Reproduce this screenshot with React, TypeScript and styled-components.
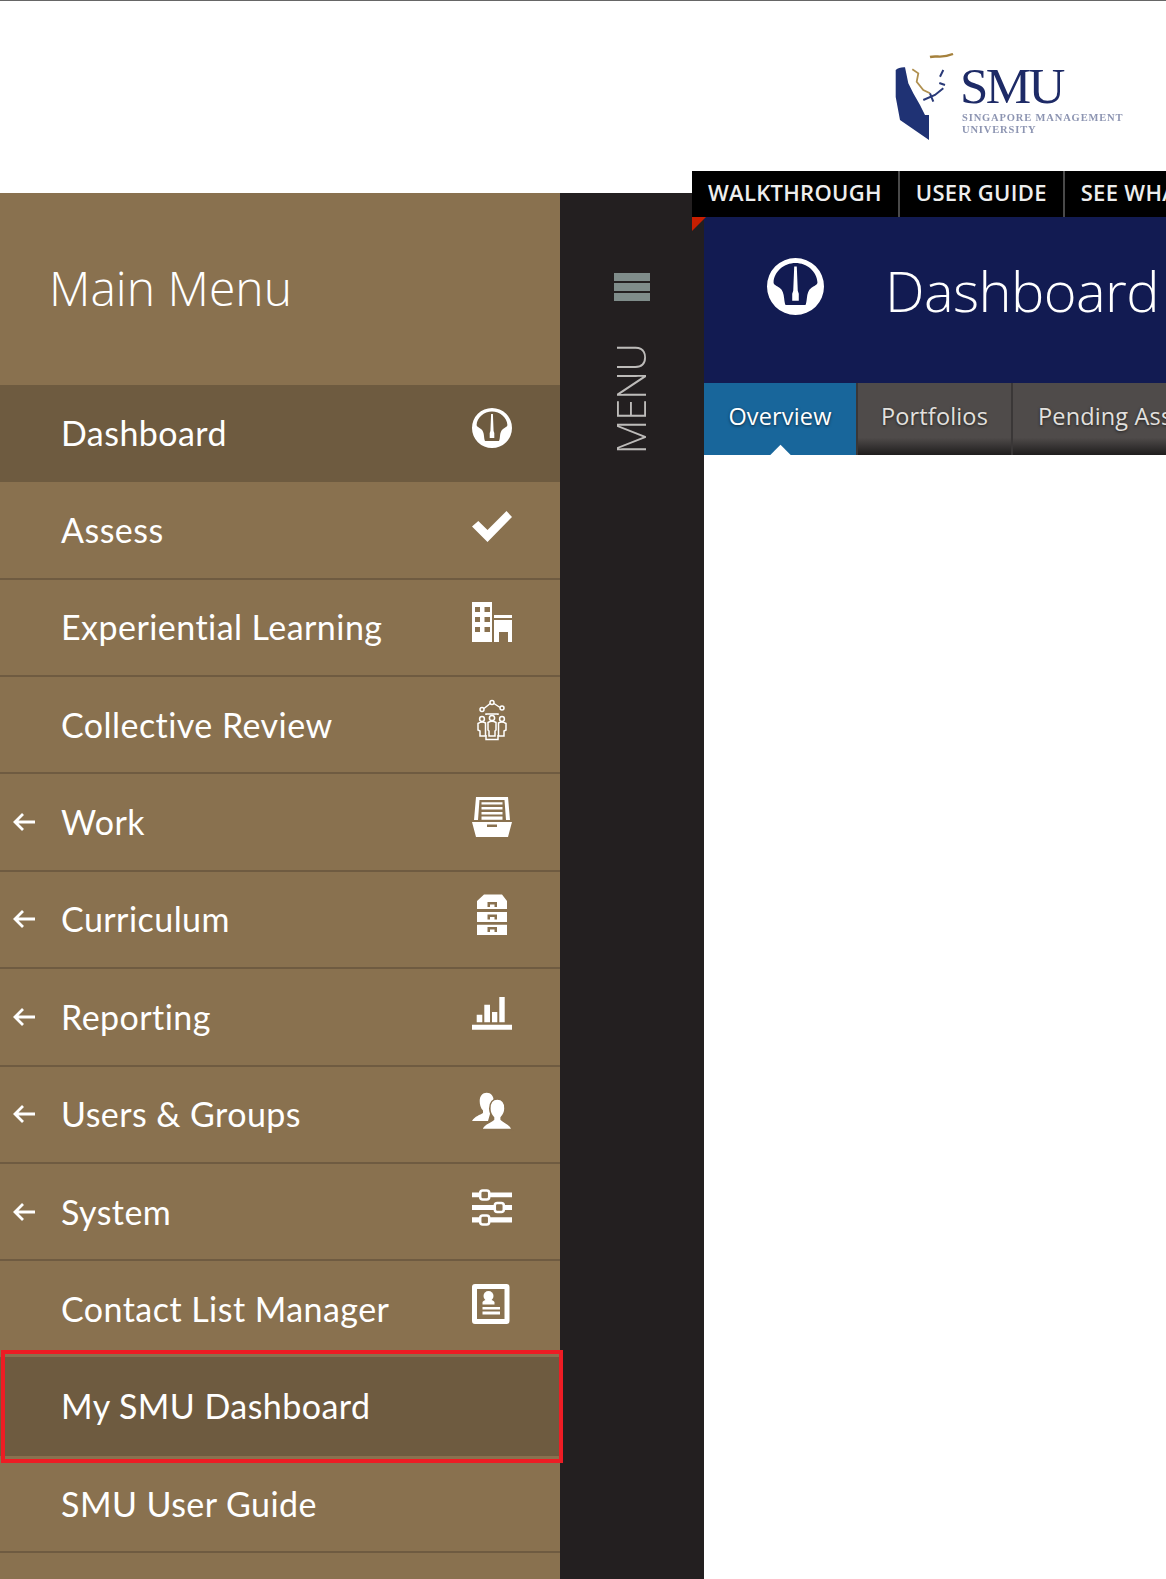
import React from "react";
import styled, { createGlobalStyle } from "styled-components";

const Global = createGlobalStyle`
  html, body { margin: 0; padding: 0; background: #fff; }
`;

const Page = styled.div`
  width: 1166px;
  height: 1579px;
  overflow: hidden;
  box-sizing: border-box;
  border-top: 1px solid #666;
  font-family: "Open Sans", "Liberation Sans", sans-serif;
`;
const Header = styled.header`
  height: 192px;
  box-sizing: border-box;
  padding: 52px 0 0 895px;
`;
const Logo = styled.div`
  display: flex;
  gap: 6px;
  filter: blur(0.5px);
`;
const LogoText = styled.div`
  display: flex;
  flex-direction: column;
  font-family: "Liberation Serif", serif;
  color: #1d2a66;
`;
const LogoName = styled.div`
  font-size: 51px;
  line-height: 36px;
  margin-top: 15px;
  letter-spacing: -2.6px;
`;
const LogoSub = styled.div`
  font-size: 10.5px;
  line-height: 12px;
  margin: 8px 0 0 2px;
  font-weight: 700;
  letter-spacing: 0.85px;
  color: #8d95b2;
  white-space: nowrap;
`;
const Main = styled.div`
  display: flex;
  height: 1386px;
`;
const Sidebar = styled.nav`
  width: 560px;
  flex: none;
  background: #89714f;
  position: relative;
  z-index: 2;
`;
const MenuTitle = styled.h2`
  height: 192px;
  margin: 0;
  box-sizing: border-box;
  padding: 57px 0 0 49px;
  font-weight: 300;
  font-size: 48px;
  line-height: 76px;
  color: #fff;
`;
const Row = styled.div<{ $active?: boolean; $marked?: boolean }>`
  height: 97.36px;
  box-sizing: border-box;
  display: flex;
  align-items: center;
  color: #fff;
  background: ${(p) => (p.$active ? "#6e5b40" : "transparent")};
  border-bottom: 2px solid ${(p) => (p.$active ? "#6e5b40" : "#6f5b41")};
  position: relative;
  ${(p) =>
    p.$marked &&
    `&::after {
      content: "";
      position: absolute;
      left: 1px;
      right: -3px;
      top: -8.6px;
      bottom: -9px;
      border: 4px solid #ed1c24;
    }`}
`;
const ArrowSlot = styled.div`
  width: 61px;
  flex: none;
  box-sizing: border-box;
  padding-left: 13px;
  display: flex;
  align-items: center;
`;
const Label = styled.span`
  flex: 1;
  font-family: Lato, "Open Sans", sans-serif;
  font-size: 34px;
  line-height: 40px;
  letter-spacing: 0.45px;
  color: #fff;
  white-space: nowrap;
`;
const IconSlot = styled.div`
  width: 40px;
  height: 40px;
  flex: none;
  margin: 0 48px 10px 0;
  color: #fff;
`;
const Rail = styled.div`
  width: 144px;
  flex: none;
  background: #231f20;
  display: flex;
  flex-direction: column;
  align-items: center;
  padding-top: 80px;
  box-sizing: border-box;
`;
const Burger = styled.div`
  width: 36px;
  height: 28px;
  display: flex;
  flex-direction: column;
  justify-content: space-between;
`;
const BurgerBar = styled.span`
  height: 8px;
  background: #7f8c8a;
`;
const RailText = styled.div`
  writing-mode: vertical-rl;
  transform: rotate(180deg);
  margin: 43px 3px 0 0;
  font-weight: 300;
  font-size: 40px;
  line-height: 36px;
  letter-spacing: -1px;
  color: #bdbbb9;
`;
const Content = styled.div`
  flex: 1;
  min-width: 0;
  margin: -22px 0 0 -12px;
  position: relative;
  z-index: 1;
`;
const TopNav = styled.div`
  height: 46px;
  background: #000;
  display: flex;
  overflow: hidden;
  white-space: nowrap;
`;
const TopLink = styled.div`
  padding: 0 16px 4px 16px;
  display: flex;
  align-items: center;
  font-size: 22px;
  font-weight: 600;
  color: #eee;
  letter-spacing: 0.3px;
  border-right: 2px solid #4a4a4a;
  &:last-child { border-right: 0; }
`;
const Corner = styled.div`
  position: absolute;
  left: 0;
  top: 46px;
  width: 0;
  height: 0;
  border-style: solid;
  border-width: 14px 14px 0 0;
  border-color: #c81e00 transparent transparent transparent;
  z-index: 1;
`;
const Body = styled.div`
  margin-left: 12px;
`;
const Banner = styled.div`
  height: 166px;
  box-sizing: border-box;
  background: #121b52;
  display: flex;
  padding: 41px 0 0 63px;
  color: #fff;
  overflow: hidden;
`;
const BannerIcon = styled.div`
  width: 57px;
  height: 57px;
  flex: none;
  margin-right: 61px;
`;
const BannerTitle = styled.h1`
  margin: -4px 0 0;
  font-weight: 300;
  font-size: 56px;
  line-height: 72px;
  letter-spacing: -0.6px;
  white-space: nowrap;
`;
const Tabs = styled.div`
  height: 72px;
  display: flex;
  overflow: hidden;
  white-space: nowrap;
`;
const Tab = styled.div<{ $current?: boolean; $w?: number }>`
  flex: none;
  width: ${(p) => p.$w ?? 153}px;
  box-sizing: content-box;
  height: 72px;
  line-height: 66px;
  text-align: center;
  font-size: 23.5px;
  letter-spacing: 0.15px;
  color: ${(p) => (p.$current ? "#fff" : "#e2e0de")};
  text-shadow: 0 1px 3px rgba(0, 0, 0, 0.6);
  border-right: 2px solid #3a3737;
  position: relative;
  background: ${(p) =>
    p.$current
      ? "#18669b"
      : "linear-gradient(#4f4b4a 0, #4f4b4a 76%, #1f1d1d 100%)"};
  ${(p) =>
    p.$current &&
    `&::after {
      content: "";
      position: absolute;
      left: 66px;
      bottom: -11px;
      width: 21px;
      height: 21px;
      box-sizing: border-box;
      background: #fff;
      transform: rotate(45deg) scale(.72);
    }`}
`;
const PendingTab = styled(Tab)`
  text-align: left;
  padding-left: 25px;
  width: 300px;
`;

const Svg: React.FC<{ children: React.ReactNode; w?: number; h?: number }> = ({ children, w = 40, h = 40 }) => (
  <svg width="100%" height="100%" viewBox={`0 0 ${w} ${h}`} fill="currentColor" style={{ display: "block", overflow: "visible" }}>
    {children}
  </svg>
);

const Gauge = () => (
  <Svg>
    <path
      fillRule="evenodd"
      d="M20 0a20 20 0 1 0 0 40a20 20 0 1 0 0-40Z
         M4.6 17C5 9.5 12 3.5 20 3.5C28 3.5 35 9.5 35.4 17C35.5 19 33 19.5 31 21C29 22.5 28.3 25 28 28C27.8 30 27.5 32 27 33H13C12.5 32 12.2 30 12 28C11.7 25 11 22.5 9 21C7 19.5 4.5 19 4.6 17Z
         M19.1 6H20.9L21.6 23L22.3 25V30H17.7V25L18.4 23Z"
    />
  </Svg>
);
const Check = () => (
  <Svg>
    <path d="M0 21.5L15.5 37L40 12L34.5 6L15.5 25L6.3 16Z" />
  </Svg>
);
const Building = () => (
  <Svg>
    <path
      fillRule="evenodd"
      d="M0 0H20V40H0ZM3 5V10H8V5ZM12.5 5V10H18V5ZM3 15V20H8V15ZM12.5 15V20H18V15ZM3 25V30H8V25ZM12.5 25V30H18V25Z
         M22 13H40V16H22ZM22 18H40V40H36V30H27V40H22Z"
    />
  </Svg>
);
const People = () => (
  <Svg>
    <g fill="none" stroke="currentColor" strokeWidth="1.5">
      <circle cx="20" cy="2.5" r="2" />
      <circle cx="10" cy="9.5" r="2" />
      <circle cx="30" cy="8" r="2" />
      <path d="M12 8.5L18.2 3.5M22 3.5L28 7.5" />
      <path d="M14 15V14H26V15M14 35V39.5H26V35" />
      <circle cx="20" cy="18" r="2.6" />
      <path d="M16 22.5Q20 20 24 22.5V30L23 31V36H17V31L16 30Z" />
      <circle cx="10" cy="19" r="2.4" />
      <path d="M6 23.5Q10 21 13.5 23V30V36H8V31L6 30Z" />
      <circle cx="30" cy="19" r="2.4" />
      <path d="M26.5 23Q30 21 34 23.5V30L32 31V36H26.5Z" />
    </g>
  </Svg>
);
const Tray = () => (
  <Svg>
    <path
      fillRule="evenodd"
      d="M0 25H40L36 40H4ZM15 27.5V30H25V27.5Z"
    />
    <path d="M4 0H36L38 23H34L32.5 3H7.5L6 23H2Z" />
    <path d="M9.5 5.3H30.5V7.6H9.5ZM9.5 10H30.5V12.6H9.5ZM9.5 15H30.5V17.6H9.5ZM9.5 19.5H30.5V22.7H9.5Z" />
  </Svg>
);
const Drawers = () => (
  <Svg>
    <path
      fillRule="evenodd"
      d="M5 7L12 .5H30L35 7V15H5ZM15.5 8V13H18V10.5H22.5V13H25V8Z
         M5 18H35V28H5ZM15.5 20.5V25.5H18V23H22.5V25.5H25V20.5Z
         M5 30.7H35V41H5ZM15.5 33V38H18V35.5H22.5V38H25V33Z"
    />
  </Svg>
);
const Bars = () => (
  <Svg>
    <path d="M4.7 22.7H10.3V30.3H4.7ZM12.3 12.7H18V30.3H12.3ZM20 20H25.3V30.3H20ZM27.3 5H32.7V30.3H27.3ZM0 32.7H40V37.7H0Z" />
  </Svg>
);
const Users = () => (
  <Svg>
    <path d="M0 32C3 27 8 26 11 24V21.5C8.5 19 7.7 15 7.7 12C7.7 7 10.5 3.8 14.7 3.8C19 3.8 21.7 7 21.7 12C21.7 17 20 20 18 22V25L16 32Z" />
    <path
      stroke="#89714f"
      strokeWidth="1.6"
      d="M9.7 40.5C11 34.5 19 33.5 21.5 30.5V28.5C19 26 17.8 23 17.8 19.5C17.8 13.5 21 10 25.3 10C29.8 10 33 13.5 33 19.5C33 23 31.5 26 29.2 28.5V30.5C32 33.5 38.5 34.5 40.3 40.5Z"
    />
  </Svg>
);
const Sliders = () => {
  const bg = "#89714f";
  return (
    <Svg>
      <path d="M0 5.6H40V10.3H0ZM0 18H40V23H0ZM0 30.3H40V35.6H0Z" />
      {[
        [12.7, 8],
        [27.3, 20.4],
        [12.7, 33],
      ].map(([x, y]) => (
        <rect key={y} x={x - 4.5} y={y - 4.5} width="9" height="9" rx="2.5" fill={bg} stroke="currentColor" strokeWidth="2.5" />
      ))}
    </Svg>
  );
};
const Contact = () => (
  <Svg>
    <path
      fillRule="evenodd"
      d="M3 0H34.5A3 3 0 0 1 37.5 3V37A3 3 0 0 1 34.5 40H3A3 3 0 0 1 0 37V3A3 3 0 0 1 3 0ZM5 5V35H32.5V5Z"
    />
    <circle cx="16.5" cy="12" r="5" />
    <path d="M10.5 20.5V18Q12 15.5 16.5 15.5Q21 15.5 22.5 18V20.5ZM10.5 23H28V25.5H10.5ZM10.5 27.5H28V30.5H10.5Z" />
  </Svg>
);
const LeftArrow = () => (
  <svg width="23" height="20" viewBox="0 0 23 20" fill="none" stroke="#fff" strokeWidth="2.8" style={{ display: "block" }}>
    <path d="M22 10H2M10 2L2 10L10 18" />
  </svg>
);

const items: { label: string; icon?: React.ReactNode; arrow?: boolean; active?: boolean; marked?: boolean }[] = [
  { label: "Dashboard", icon: <Gauge />, active: true },
  { label: "Assess", icon: <Check /> },
  { label: "Experiential Learning", icon: <Building /> },
  { label: "Collective Review", icon: <People /> },
  { label: "Work", icon: <Tray />, arrow: true },
  { label: "Curriculum", icon: <Drawers />, arrow: true },
  { label: "Reporting", icon: <Bars />, arrow: true },
  { label: "Users & Groups", icon: <Users />, arrow: true },
  { label: "System", icon: <Sliders />, arrow: true },
  { label: "Contact List Manager", icon: <Contact /> },
  { label: "My SMU Dashboard", active: true, marked: true },
  { label: "SMU User Guide" },
];

export default function App() {
  return (
    <Page>
      <Global />
      <Header>
        <Logo>
          <svg width="59" height="90" viewBox="0 0 59 90" style={{ flex: "none", display: "block" }}>
            <path d="M.7 17Q4 14 10 14.3L13.3 30.3L18.3 40.3L25 52L30 62H34L34 87L5 67L.7 44Z" fill="#1f3274" />
            <path d="M35 4C42 2 46 6 58 1" fill="none" stroke="#a5813c" strokeWidth="2.4" />
            <path d="M17.3 16.3L23.3 20.3L21.7 28.7L28.3 37L35 40.3" fill="none" stroke="#b0904f" strokeWidth="1.8" />
            <path d="M28.3 47L40 42L48.3 35.3M35 40.3L38.3 48.7M45 23.7L48.3 17M44.3 30L50 32" fill="none" stroke="#2a3a78" strokeWidth="2" />
          </svg>
          <LogoText>
            <LogoName>SMU</LogoName>
            <LogoSub>
              SINGAPORE MANAGEMENT
              <br />
              UNIVERSITY
            </LogoSub>
          </LogoText>
        </Logo>
      </Header>
      <Main>
        <Sidebar>
          <MenuTitle>Main Menu</MenuTitle>
          {items.map((it) => (
            <Row key={it.label} $active={it.active} $marked={it.marked}>
              <ArrowSlot>{it.arrow && <LeftArrow />}</ArrowSlot>
              <Label>{it.label}</Label>
              {it.icon && <IconSlot>{it.icon}</IconSlot>}
            </Row>
          ))}
        </Sidebar>
        <Rail>
          <Burger>
            <BurgerBar />
            <BurgerBar />
            <BurgerBar />
          </Burger>
          <RailText>MENU</RailText>
        </Rail>
        <Content>
          <TopNav>
            <TopLink>WALKTHROUGH</TopLink>
            <TopLink>USER GUIDE</TopLink>
            <TopLink>SEE WHAT&apos;S NEW</TopLink>
          </TopNav>
          <Corner />
          <Body>
            <Banner>
              <BannerIcon>
                <Gauge />
              </BannerIcon>
              <BannerTitle>Dashboard</BannerTitle>
            </Banner>
            <Tabs>
              <Tab $current $w={152}>Overview</Tab>
              <Tab>Portfolios</Tab>
              <PendingTab>Pending Assessments</PendingTab>
            </Tabs>
          </Body>
        </Content>
      </Main>
    </Page>
  );
}
